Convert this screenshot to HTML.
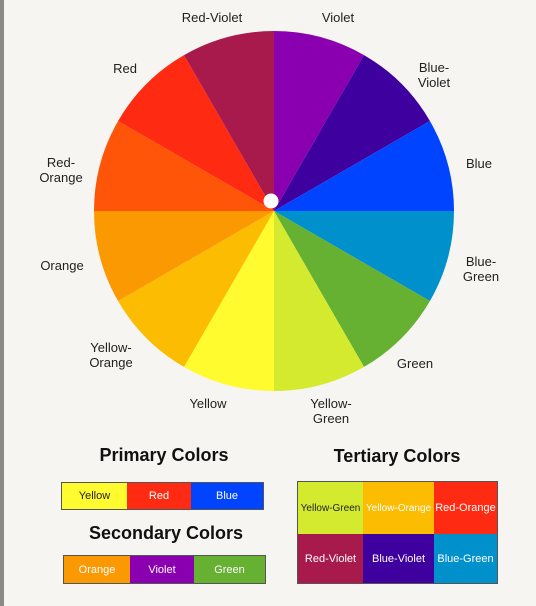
<!DOCTYPE html>
<html><head><meta charset="utf-8"><style>
body{margin:0;width:536px;height:606px;background:#f6f5f1;position:relative;overflow:hidden;font-family:"Liberation Sans",sans-serif;}
.bar{position:absolute;left:0;top:0;width:4px;height:606px;background:#8a8a88}
.l{position:absolute;font-size:13px;color:#222;text-align:center;line-height:15px;transform:translateX(-50%);white-space:nowrap}
.t{position:absolute;font-weight:bold;font-size:18px;color:#111;transform:translateX(-50%);white-space:nowrap}
.row{position:absolute;display:flex;border:1px solid #555;box-sizing:border-box}
.row div{display:flex;align-items:center;justify-content:center;font-size:11px;color:#fff;height:100%}
</style></head><body>
<div class="bar"></div>
<svg width="536" height="606" style="position:absolute;left:0;top:0">
<g>
<path d="M274,31A180,180 0 0 1 364,55.1L274,211Z" fill="#8a00b0"/>
<path d="M364,55.1A180,180 0 0 1 429.9,121L274,211Z" fill="#3f00a0"/>
<path d="M429.9,121A180,180 0 0 1 454,211L274,211Z" fill="#0044ff"/>
<path d="M454,211A180,180 0 0 1 429.9,301L274,211Z" fill="#0090cc"/>
<path d="M429.9,301A180,180 0 0 1 364,366.9L274,211Z" fill="#66b032"/>
<path d="M364,366.9A180,180 0 0 1 274,391L274,211Z" fill="#d4ea2e"/>
<path d="M274,391A180,180 0 0 1 184,366.9L274,211Z" fill="#fffb2e"/>
<path d="M184,366.9A180,180 0 0 1 118.1,301L274,211Z" fill="#fbbc02"/>
<path d="M118.1,301A180,180 0 0 1 94,211L274,211Z" fill="#fb9902"/>
<path d="M94,211A180,180 0 0 1 118.1,121L274,211Z" fill="#ff5508"/>
<path d="M118.1,121A180,180 0 0 1 184,55.1L274,211Z" fill="#ff2a12"/>
<path d="M184,55.1A180,180 0 0 1 274,31L274,211Z" fill="#a81a4b"/>
</g>
<circle cx="271" cy="201" r="7.5" fill="#fff"/>
</svg>
<div class="l" style="left:212px;top:10px">Red-Violet</div>
<div class="l" style="left:338px;top:10px">Violet</div>
<div class="l" style="left:434px;top:60px">Blue-<br>Violet</div>
<div class="l" style="left:479px;top:156px">Blue</div>
<div class="l" style="left:481px;top:254px">Blue-<br>Green</div>
<div class="l" style="left:415px;top:356px">Green</div>
<div class="l" style="left:331px;top:396px">Yellow-<br>Green</div>
<div class="l" style="left:208px;top:396px">Yellow</div>
<div class="l" style="left:111px;top:340px">Yellow-<br>Orange</div>
<div class="l" style="left:62px;top:258px">Orange</div>
<div class="l" style="left:61px;top:155px">Red-<br>Orange</div>
<div class="l" style="left:125px;top:61px">Red</div>

<div class="t" style="left:164px;top:445px">Primary Colors</div>
<div class="row" style="left:61px;top:482px;width:203px;height:28px">
<div style="width:65px;background:#fffb2e;color:#222">Yellow</div>
<div style="width:64px;background:#ff2a12">Red</div>
<div style="flex:1;background:#0044ff">Blue</div></div>
<div class="t" style="left:166px;top:523px">Secondary Colors</div>
<div class="row" style="left:63px;top:555px;width:203px;height:29px">
<div style="width:66px;background:#fb9902">Orange</div>
<div style="width:64px;background:#8a00b0">Violet</div>
<div style="flex:1;background:#66b032">Green</div></div>
<div class="t" style="left:397px;top:446px">Tertiary Colors</div>
<div style="position:absolute;left:297px;top:481px;width:201px;height:103px;border:1px solid #555;box-sizing:border-box;display:grid;grid-template-columns:65px 71px 1fr;grid-template-rows:52px 1fr;font-size:10px;color:#fff">
<div style="background:#d4ea2e;color:#222;display:flex;align-items:center;justify-content:center">Yellow-Green</div>
<div style="background:#fbbc02;display:flex;align-items:center;justify-content:center">Yellow-Orange</div>
<div style="background:#ff2a12;display:flex;align-items:center;justify-content:center;font-size:11px">Red-Orange</div>
<div style="background:#a81a4b;display:flex;align-items:center;justify-content:center;font-size:11px">Red-Violet</div>
<div style="background:#3f00a0;display:flex;align-items:center;justify-content:center;font-size:11px">Blue-Violet</div>
<div style="background:#0090cc;display:flex;align-items:center;justify-content:center;font-size:11px">Blue-Green</div>
</div>
</body></html>
